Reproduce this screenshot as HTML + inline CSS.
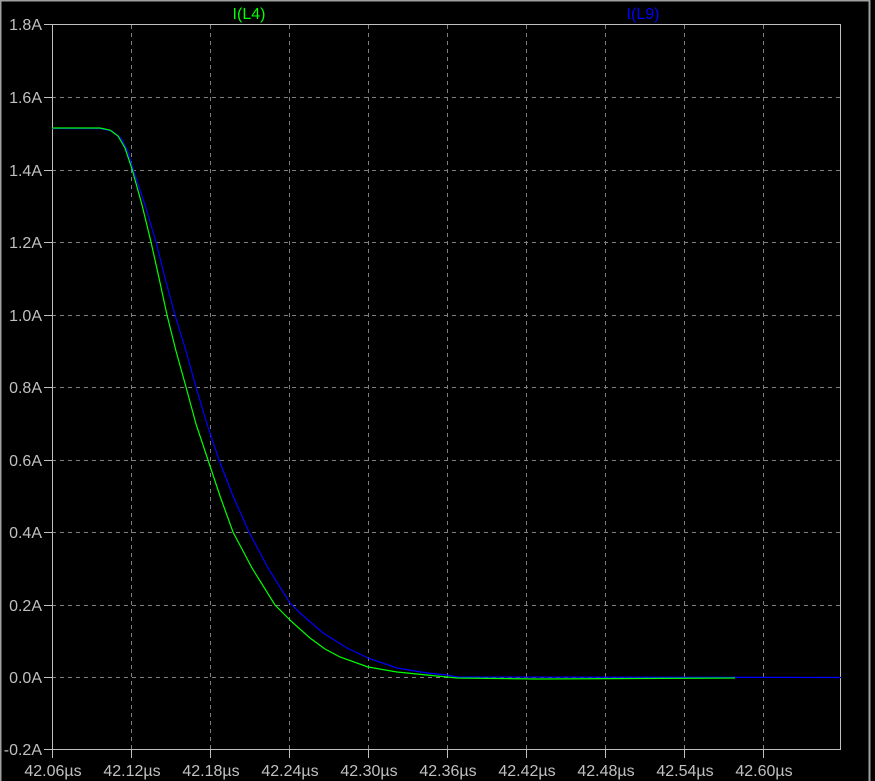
<!DOCTYPE html>
<html><head><meta charset="utf-8"><style>
html,body{margin:0;padding:0;background:#000;}
svg{display:block;}
text{font-family:"Liberation Sans",sans-serif;font-size:16px;fill:#c0c0c0;}
</style></head><body>
<svg width="875" height="781" viewBox="0 0 875 781" xmlns="http://www.w3.org/2000/svg">
<rect x="0" y="0" width="875" height="781" fill="#000"/>
<rect x="0.5" y="0.5" width="869" height="790" fill="none" stroke="#a0a0a0" stroke-width="2"/>
<g stroke="#808080" stroke-width="1" stroke-dasharray="4,4">
<line x1="131.5" y1="25" x2="131.5" y2="750"/>
<line x1="210.5" y1="25" x2="210.5" y2="750"/>
<line x1="289.5" y1="25" x2="289.5" y2="750"/>
<line x1="368.5" y1="25" x2="368.5" y2="750"/>
<line x1="447.5" y1="25" x2="447.5" y2="750"/>
<line x1="526.5" y1="25" x2="526.5" y2="750"/>
<line x1="605.5" y1="25" x2="605.5" y2="750"/>
<line x1="684.5" y1="25" x2="684.5" y2="750"/>
<line x1="763.5" y1="25" x2="763.5" y2="750"/>
<line x1="52" y1="97.5" x2="841" y2="97.5"/>
<line x1="52" y1="170.5" x2="841" y2="170.5"/>
<line x1="52" y1="242.5" x2="841" y2="242.5"/>
<line x1="52" y1="315.5" x2="841" y2="315.5"/>
<line x1="52" y1="387.5" x2="841" y2="387.5"/>
<line x1="52" y1="460.5" x2="841" y2="460.5"/>
<line x1="52" y1="532.5" x2="841" y2="532.5"/>
<line x1="52" y1="605.5" x2="841" y2="605.5"/>
<line x1="52" y1="677.5" x2="841" y2="677.5"/>
</g>
<rect x="52.5" y="24.5" width="788" height="725" fill="none" stroke="#c0c0c0" stroke-width="1"/>
<g stroke="#c0c0c0" stroke-width="1">
<line x1="44" y1="24.5" x2="52" y2="24.5"/><line x1="44" y1="97.5" x2="52" y2="97.5"/>
<line x1="44" y1="170.5" x2="52" y2="170.5"/><line x1="44" y1="242.5" x2="52" y2="242.5"/>
<line x1="44" y1="315.5" x2="52" y2="315.5"/><line x1="44" y1="387.5" x2="52" y2="387.5"/>
<line x1="44" y1="460.5" x2="52" y2="460.5"/><line x1="44" y1="532.5" x2="52" y2="532.5"/>
<line x1="44" y1="605.5" x2="52" y2="605.5"/><line x1="44" y1="677.5" x2="52" y2="677.5"/>
<line x1="44" y1="749.5" x2="52" y2="749.5"/>
<line x1="52.5" y1="750" x2="52.5" y2="758"/><line x1="131.5" y1="750" x2="131.5" y2="758"/>
<line x1="210.5" y1="750" x2="210.5" y2="758"/><line x1="289.5" y1="750" x2="289.5" y2="758"/>
<line x1="368.5" y1="750" x2="368.5" y2="758"/><line x1="447.5" y1="750" x2="447.5" y2="758"/>
<line x1="526.5" y1="750" x2="526.5" y2="758"/><line x1="605.5" y1="750" x2="605.5" y2="758"/>
<line x1="684.5" y1="750" x2="684.5" y2="758"/><line x1="763.5" y1="750" x2="763.5" y2="758"/>
</g>
<g text-anchor="end">
<text x="42" y="30">1.8A</text><text x="42" y="103">1.6A</text><text x="42" y="176">1.4A</text>
<text x="42" y="248">1.2A</text><text x="42" y="321">1.0A</text><text x="42" y="393">0.8A</text>
<text x="42" y="466">0.6A</text><text x="42" y="538">0.4A</text><text x="42" y="611">0.2A</text>
<text x="42" y="683">0.0A</text><text x="42" y="755">-0.2A</text>
</g>
<g text-anchor="middle">
<text x="53" y="776">42.06µs</text><text x="132" y="776">42.12µs</text><text x="211" y="776">42.18µs</text>
<text x="290" y="776">42.24µs</text><text x="369" y="776">42.30µs</text><text x="448" y="776">42.36µs</text>
<text x="527" y="776">42.42µs</text><text x="606" y="776">42.48µs</text><text x="685" y="776">42.54µs</text>
<text x="764" y="776">42.60µs</text>
</g>
<text x="249" y="19" text-anchor="middle" style="fill:#00ff00">I(L4)</text>
<text x="643" y="19" text-anchor="middle" style="fill:#0000ff">I(L9)</text>
<polyline fill="none" stroke="#0000ff" stroke-width="1.2" points="52,128.5 100,128.5 112,131 121,138 128,152 133,169 145,205 156,242 165,278 175,315 186,351 196,387 207,424 219,460 233,496 249,532 268,568 290,603 300,613 323,633 347,648 368,658 397,668 427,673 447,675 457,677 841,677.5"/>
<polyline fill="none" stroke="#00ff00" stroke-width="1.2" points="52,128 100,128 110,130 118,136 125,148 132,169 142,205 151,242 159,278 167,315 176,351 186,387 196,424 208,460 220,496 233,532 252,568 275,605 292,622 310,638 325,649 340,657 368,667 397,672 427,675 457,678 537,679 735,678"/>
</svg>
</body></html>
